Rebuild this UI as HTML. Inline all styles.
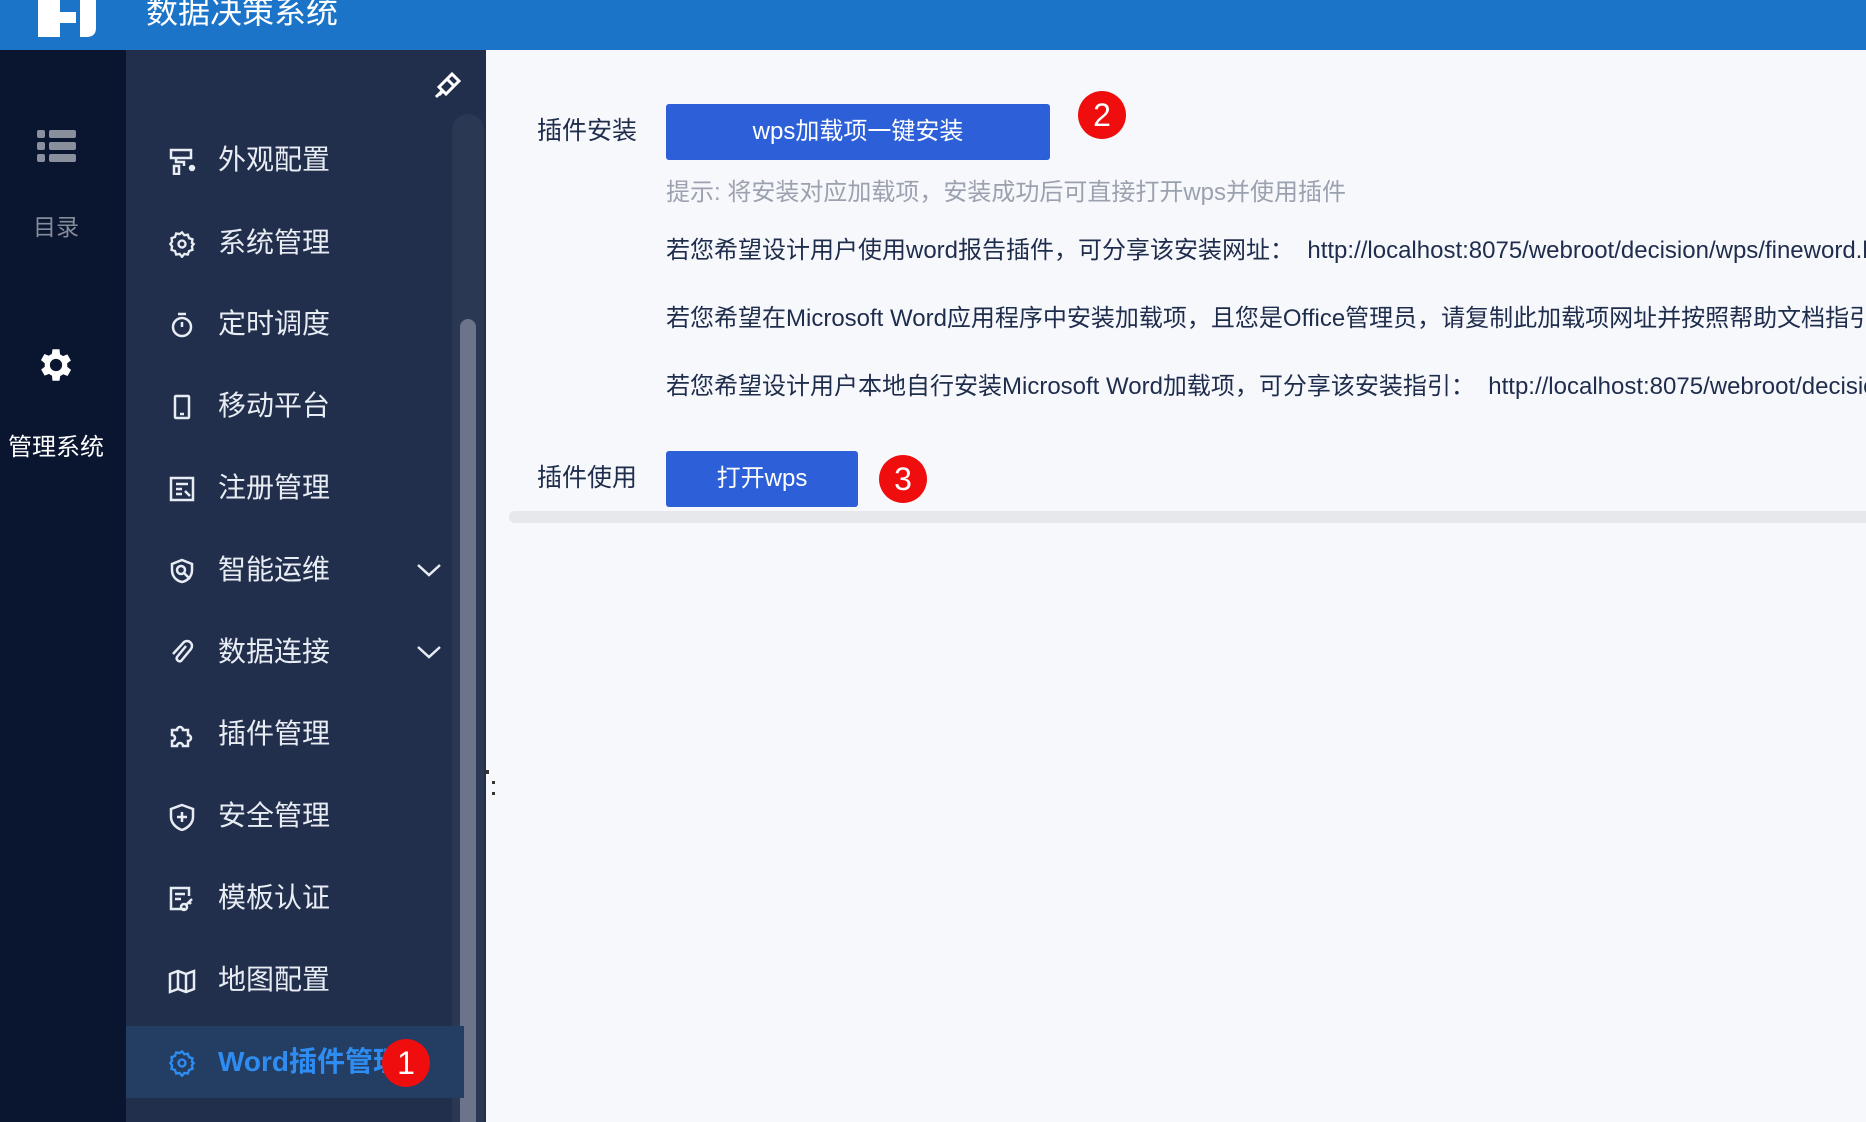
<!DOCTYPE html>
<html><head><meta charset="utf-8"><style>
*{margin:0;padding:0;box-sizing:border-box}
body{width:1866px;height:1122px;overflow:hidden;background:#f7f8fc;font-family:"Liberation Sans","Noto Sans CJK SC",sans-serif;position:relative}
.abs{position:absolute}
#hdr{left:0;top:0;width:1866px;height:50px;background:#1b74c8}
#left{left:0;top:50px;width:126px;height:1072px;background:#0a1530}
#menu{left:126px;top:50px;width:360px;height:1072px;background:#212e4c}
.item{position:absolute;left:126px;width:338px;height:72px;color:#e8ecf3;font-size:28px;line-height:72px}
.item span{position:absolute;left:92px}
.item svg{position:absolute;left:42px;top:23px}
.chev{position:absolute;left:290px;top:26px}
.t{position:absolute;font-size:24px;color:#1f2d4d;white-space:nowrap;line-height:28px}
.btn{position:absolute;background:#2c5fd8;color:#fff;font-size:24px;text-align:center;border-radius:3px}
.badge{position:absolute;width:46px;height:46px;border-radius:50%;background:#f00d0d;color:#fff;font-size:32px;text-align:center;line-height:46px}
</style></head><body>
<div id="hdr" class="abs">
 <svg class="abs" style="left:38px;top:0" width="58" height="38"><path d="M0 0h22v12h16v11h-16v14h-22z" fill="#fff"/><path d="M42 0h16v28q0 9-10 9h-6z" fill="#fff"/></svg>
 <div class="abs" style="left:146px;top:-7px;color:#fff;font-size:32px;line-height:38px">数据决策系统</div>
</div>
<div id="left" class="abs">
 <svg class="abs" style="left:37px;top:80px" width="39" height="33" fill="#8a8f9e"><rect x="0" y="0" width="8" height="8" rx="2"/><rect x="12" y="0" width="27" height="8" rx="2"/><rect x="0" y="12" width="8" height="8" rx="2"/><rect x="12" y="12" width="27" height="8" rx="2"/><rect x="0" y="24" width="8" height="8" rx="2"/><rect x="12" y="24" width="27" height="8" rx="2"/></svg>
 <div class="abs" style="left:33px;top:158px;color:#858b99;font-size:23px">目录</div>
 <svg class="abs" style="left:35px;top:294px" width="42" height="42" viewBox="0 0 24 24"><path fill="#fff" d="M19.4 13a7.5 7.5 0 0 0 0-2l2.1-1.6-2-3.5-2.5 1a7 7 0 0 0-1.7-1L15 3h-4l-.4 2.7a7 7 0 0 0-1.7 1l-2.5-1-2 3.5L6.6 11a7.5 7.5 0 0 0 0 2l-2.1 1.6 2 3.5 2.5-1a7 7 0 0 0 1.7 1L11 21h4l.4-2.7a7 7 0 0 0 1.7-1l2.5 1 2-3.5zM13 15.5a3.5 3.5 0 1 1 0-7 3.5 3.5 0 0 1 0 7z" transform="translate(-1 0)"/></svg>
 <div class="abs" style="left:8px;top:377px;color:#fff;font-size:24px">管理系统</div>
</div>
<div id="menu" class="abs"></div>
<svg class="abs" style="left:433px;top:70px" width="30" height="30" viewBox="0 0 30 30" fill="none" stroke="#fff" stroke-width="3"><path d="M6 17l8-8 7 7-8 8zM14 9l5-5 7 7-5 5M3 27l7-7M9 22l-3 3"/></svg>
<div class="abs" style="left:452px;top:114px;width:32px;height:1008px;background:#2a3853;border-radius:16px 16px 0 0"></div>
<div class="abs" style="left:460px;top:319px;width:16px;height:803px;background:#6b7489;border-radius:8px 8px 0 0"></div>
<div class="abs" style="left:126px;top:1026px;width:338px;height:72px;background:#233d63"></div>

<div class="item" style="top:124px"><svg width="28" height="28" fill="none" stroke="#e8ecf3" stroke-width="2.5"><path d="M3 3h20v8H3zM8 11v4h8v4M6 19h5v8H6z"/><circle cx="24" cy="21" r="2" fill="#e8ecf3"/></svg><span>外观配置</span></div>
<div class="item" style="top:207px"><svg width="28" height="28" viewBox="0 0 24 24" fill="none" stroke="#e8ecf3" stroke-width="2"><path d="M12 2l2 2.5 3-.5 1 3 3 1-.5 3L22 12l-1.5 2 .5 3-3 1-1 3-3-.5-2 2.5-2-2.5-3 .5-1-3-3-1 .5-3L2 12l1.5-2-.5-3 3-1 1-3 3 .5z"/><circle cx="12" cy="12" r="3"/></svg><span>系统管理</span></div>
<div class="item" style="top:288px"><svg width="28" height="28" fill="none" stroke="#e8ecf3" stroke-width="2.5"><circle cx="14" cy="16" r="9"/><path d="M10 3h8M14 11v5"/></svg><span>定时调度</span></div>
<div class="item" style="top:370px"><svg width="28" height="28" fill="none" stroke="#e8ecf3" stroke-width="2.5"><rect x="7" y="3" width="14" height="22" rx="1"/><path d="M12 21h4"/></svg><span>移动平台</span></div>
<div class="item" style="top:452px"><svg width="28" height="28" fill="none" stroke="#e8ecf3" stroke-width="2.5"><rect x="3" y="3" width="22" height="22"/><path d="M8 9h12M8 14h6M8 19h6M17 16l5 5"/></svg><span>注册管理</span></div>
<div class="item" style="top:534px"><svg width="28" height="28" fill="none" stroke="#e8ecf3" stroke-width="2.5"><path d="M14 3l10 4v6c0 7-5 11-10 12C9 24 4 20 4 13V7z"/><circle cx="13" cy="13" r="4"/><path d="M16 16l6 6"/></svg><span>智能运维</span><svg class="chev" width="26" height="18" fill="none" stroke="#e8ecf3" stroke-width="2.5" style="left:290px;top:28px"><path d="M2 3l11 10 11-10"/></svg></div>
<div class="item" style="top:616px"><svg width="28" height="28" fill="none" stroke="#e8ecf3" stroke-width="2.5"><path d="M18 7L9 18a3 3 0 0 0 4 4l10-12a5 5 0 0 0-7-7L5 15"/></svg><span>数据连接</span><svg class="chev" width="26" height="18" fill="none" stroke="#e8ecf3" stroke-width="2.5" style="left:290px;top:28px"><path d="M2 3l11 10 11-10"/></svg></div>
<div class="item" style="top:698px"><svg width="28" height="28" fill="none" stroke="#e8ecf3" stroke-width="2.5"><path d="M4 9h5a3 3 0 0 1 6 0h5v5a3 3 0 0 1 0 6v5H15a3 3 0 0 0-6 0H4v-5a3 3 0 0 0 0-6z"/></svg><span>插件管理</span></div>
<div class="item" style="top:780px"><svg width="28" height="28" fill="none" stroke="#e8ecf3" stroke-width="2.5"><path d="M14 2l11 4v8c0 6-5 11-11 13C8 25 3 20 3 14V6z"/><path d="M14 9v10M9 14h10"/></svg><span>安全管理</span></div>
<div class="item" style="top:862px"><svg width="28" height="28" fill="none" stroke="#e8ecf3" stroke-width="2.5"><path d="M17 24H3V3h18v8M7 9h10M7 14h6"/><circle cx="16" cy="22" r="3"/><path d="M18 20l6-6M21 17l2 2"/></svg><span>模板认证</span></div>
<div class="item" style="top:944px"><svg width="28" height="28" fill="none" stroke="#e8ecf3" stroke-width="2.5"><path d="M2 7l8-3 8 3 8-3v18l-8 3-8-3-8 3zM10 4v18M18 7v18"/></svg><span>地图配置</span></div>
<div class="item" style="top:1026px;color:#2f8df2;font-weight:bold"><svg width="28" height="28" viewBox="0 0 24 24" fill="none" stroke="#2f8df2" stroke-width="2"><path d="M12 2l2 2.5 3-.5 1 3 3 1-.5 3L22 12l-1.5 2 .5 3-3 1-1 3-3-.5-2 2.5-2-2.5-3 .5-1-3-3-1 .5-3L2 12l1.5-2-.5-3 3-1 1-3 3 .5z"/><circle cx="12" cy="12" r="3"/></svg><span>Word插件管理</span></div>
<div class="badge" style="left:382px;top:1039px;width:48px;height:48px;line-height:48px">1</div>
<div class="abs" style="left:485px;top:770px;width:4px;height:4px;background:#333"></div>
<div class="abs" style="left:492px;top:781px;width:3px;height:3px;background:#333"></div>
<div class="abs" style="left:492px;top:792px;width:3px;height:3px;background:#333"></div>

<div class="t" style="left:537px;top:117px;font-size:25px">插件安装</div>
<div class="btn" style="left:666px;top:104px;width:384px;height:56px;line-height:56px">wps加载项一键安装</div>
<div class="badge" style="left:1078px;top:91px;width:48px;height:48px;line-height:48px">2</div>
<div class="t" style="left:666px;top:179px;color:#9ba1ae">提示: 将安装对应加载项，安装成功后可直接打开wps并使用插件</div>
<div class="t" style="left:666px;top:237px">若您希望设计用户使用word报告插件，可分享该安装网址：&nbsp; http://localhost:8075/webroot/decision/wps/fineword.html</div>
<div class="t" style="left:666px;top:305px">若您希望在Microsoft Word应用程序中安装加载项，且您是Office管理员，请复制此加载项网址并按照帮助文档指引</div>
<div class="t" style="left:666px;top:373px">若您希望设计用户本地自行安装Microsoft Word加载项，可分享该安装指引：&nbsp; http://localhost:8075/webroot/decision</div>
<div class="t" style="left:537px;top:464px;font-size:25px">插件使用</div>
<div class="btn" style="left:666px;top:451px;width:192px;height:56px;line-height:56px">打开wps</div>
<div class="badge" style="left:879px;top:455px;width:48px;height:48px;line-height:48px">3</div>
<div class="abs" style="left:509px;top:511px;width:1400px;height:12px;background:#e6e8ec;border-radius:6px"></div>
</body></html>
